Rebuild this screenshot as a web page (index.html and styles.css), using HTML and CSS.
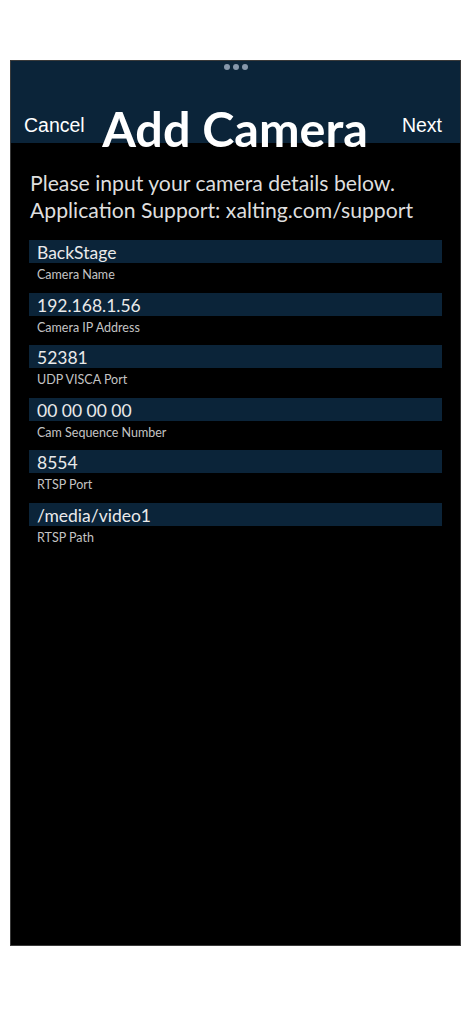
FILE: index.html
```html
<!DOCTYPE html>
<html lang="en">
<head>
<meta charset="utf-8">
<title>Add Camera</title>
<link rel="stylesheet" href="styles.css">
</head>
<body>
<div class="page">
  <div class="phone">
    <header class="header">
      <div class="grabber"><span class="dot"></span><span class="dot"></span><span class="dot"></span></div>
      <div class="nav">
        <span class="nav-btn cancel">Cancel</span>
        <h1 class="title">Add Camera</h1>
        <span class="nav-btn next">Next</span>
      </div>
    </header>
    <p class="intro">Please input your camera details below.<br>Application Support: xalting.com/support</p>
    <div class="fields">
      <div class="field"><div class="value">BackStage</div><div class="label">Camera Name</div></div>
      <div class="field"><div class="value">192.168.1.56</div><div class="label">Camera IP Address</div></div>
      <div class="field"><div class="value">52381</div><div class="label">UDP VISCA Port</div></div>
      <div class="field"><div class="value">00 00 00 00</div><div class="label">Cam Sequence Number</div></div>
      <div class="field"><div class="value">8554</div><div class="label">RTSP Port</div></div>
      <div class="field"><div class="value">/media/video1</div><div class="label">RTSP Path</div></div>
    </div>
  </div>
</div>
</body>
</html>
```

FILE: styles.css
```css
html, body {
  margin: 0;
  padding: 0;
  background: #ffffff;
}

.page {
  padding: 60px 0 0 10px;
}

.phone {
  width: 451px;
  height: 886px;
  box-sizing: border-box;
  border: 1px solid #3a3a3a;
  background: #000000;
  font-family: Lato, "Noto Sans", sans-serif;
}

.header {
  height: 82px;
  background: #0b2439;
  display: flex;
  flex-direction: column;
}

.grabber {
  display: flex;
  justify-content: center;
  gap: 3px;
  padding-top: 3px;
  height: 6px;
}

.dot {
  width: 6px;
  height: 6px;
  border-radius: 50%;
  background: #8797ab;
}

.nav {
  margin-top: 34px;
  display: grid;
  grid-template-columns: 1fr auto 1fr;
  align-items: start;
  padding: 0 18px 0 13px;
}

.nav-btn {
  font-family: "Liberation Sans", Arial, sans-serif;
  font-size: 19.5px;
  line-height: 24px;
  color: #ffffff;
  margin-top: 9px;
}

.cancel {
  justify-self: start;
}

.next {
  justify-self: end;
}

.title {
  margin: 0 0 0 4px;
  font-family: Lato, "Noto Sans", sans-serif;
  font-weight: 700;
  font-size: 48.5px;
  line-height: 48px;
  color: #ffffff;
  white-space: nowrap;
}

.intro {
  margin: 27px 0 0 0;
  padding: 0 0 0 19px;
  font-size: 21.2px;
  line-height: 27px;
  color: #dedede;
}

.fields {
  margin-top: 16px;
  padding: 0 18px;
  display: flex;
  flex-direction: column;
  gap: 9.5px;
}

.value {
  height: 23px;
  box-sizing: border-box;
  background: #0b2439;
  padding: 1px 0 0 8px;
  font-size: 17.5px;
  line-height: 23px;
  color: #eaeaea;
}

.label {
  margin-top: 4px;
  padding-left: 8px;
  font-size: 12.5px;
  line-height: 16px;
  color: #c4c4c4;
}
```
